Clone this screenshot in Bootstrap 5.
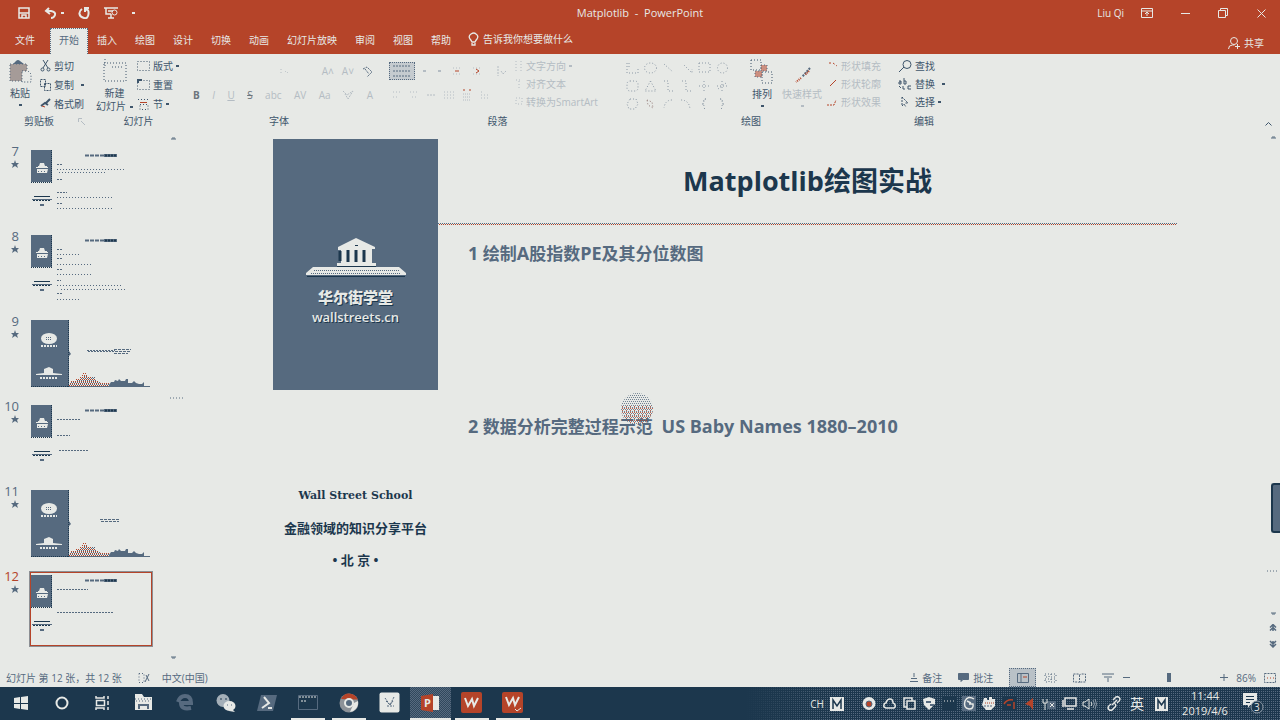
<!DOCTYPE html>
<html lang="zh-CN">
<head>
<meta charset="utf-8">
<meta name="viewport" content="width=device-width, initial-scale=1">
<title>Matplotlib - PowerPoint</title>
<link href="https://cdn.jsdelivr.net/npm/bootstrap@5.3.0/dist/css/bootstrap.min.css" rel="stylesheet">
<style>
:root{--paper:#e7e9e6;--brick:#b54429;--navy:#1c374d;--slate:#566a7f;--pale:#b4bcc3}
body{background:var(--paper);color:var(--slate);font:10px/14px "Open Sans","Noto Sans CJK SC",sans-serif}
button{background:none;border:0;padding:0;color:inherit;font:inherit}
svg{display:block;flex:none;fill:none;stroke:currentColor}
svg text{stroke:none;fill:currentColor}
.brick{background:var(--brick);color:var(--paper)}
.titlebar{height:26px}
.titlebar .docname{left:0;right:0;pointer-events:none;font-size:11px}
.titlebar .qat{gap:14px;padding-left:18px}
.winbtn{width:38px}
.tabs{height:28px}
.tabs .nav-link{color:var(--paper);padding:5px 9px 7px;line-height:14px}
.tabs .nav-link.first{padding:5px 15px 7px}
.tabs .nav-link.active{background:var(--paper);color:var(--slate);border:1px dotted var(--slate);border-bottom:0;padding:4px 8px 7px}
.ribbon{height:77px;color:#3e556b}
.group{height:75px;padding-top:3px}
.group .body{height:57px}
.group .caption{height:15px}
.g-clip{width:92px}.g-slide{width:93px}.g-font{width:188px}.g-para{width:249px}.g-draw{width:272px}.g-edit{width:60px}
.launch{width:14px}
.stack{display:flex;flex-direction:column;gap:5px;padding-top:2px}
.g-edit .stack,.g-draw .stack,.g-para .stack{gap:4px}
.mini{display:flex;align-items:center;gap:3px;height:14px;white-space:nowrap}
.big{display:flex;flex-direction:column;align-items:center;line-height:13px;white-space:nowrap;padding-top:2px}
.dim{color:var(--pale)}
.caret{width:3px;height:2px;background:currentColor;display:block}
.dot{stroke-dasharray:1 2}
.lit{border:1px dotted var(--slate);background:#c5cbcf;width:26px;height:18px}
.toolrow{height:24px}
.tools{padding-top:2px}
.shapes{display:grid;grid-template-columns:repeat(6,18px);grid-auto-rows:18px;color:#8c99a6;padding-top:2px}
.thumbs{width:184px;padding-top:13px}
.thumb{display:grid;grid-template-columns:19px 120px;column-gap:12px;height:85px;text-align:left}
.thumb .num{font-size:13px;line-height:14px;text-align:right;margin-top:-4px}
.thumb .num svg{margin:2px 0 0 auto}
.thumb .pic{height:72px;padding:2px 0}
.thumb.on .num{color:var(--brick)}
.thumb.on .num svg{color:var(--slate)}
.thumb.on .pic{outline:1px solid var(--brick);box-shadow:0 0 0 2px #8c8f94}
.sbar{width:14px}
.thumbs .sbar{margin-top:-8px}
.stage{padding:8px 0 0 89px}
.side{width:165px}
.side .panel{background:var(--slate);color:var(--paper);height:251px;padding-top:99px;text-shadow:1px 1px 0 var(--navy)}
.side .cn{font-size:15px;line-height:22px;font-weight:900}
.side .site{font-size:13px;line-height:18px;font-weight:600}
.motto{color:var(--navy);font-weight:700;padding-top:98px}
.motto .en{font:700 11px/16px "DejaVu Serif",serif}
.motto .zh{font-size:13px;line-height:16px}
.content{margin-right:89px}
.content h1{color:var(--navy);font-size:27px;line-height:36px;font-weight:700;height:84px;padding-top:24px;margin:0;text-align:center}
.rule{height:2px;background:repeating-linear-gradient(90deg,var(--slate) 0 1px,transparent 1px 2px) 0 0/100% 1px no-repeat,repeating-linear-gradient(90deg,transparent 0 1px,var(--brick) 1px 2px) 0 1px/100% 1px no-repeat}
.point{font-size:17px;line-height:24px;font-weight:700;margin:0;padding-left:30px;white-space:pre-wrap}
.point .latin{font-size:18px}
.pointer{left:183px;top:-17px;opacity:.8}
.sidetab{right:0;top:352px;width:9px;height:50px;background:var(--slate);border:2px solid var(--navy);border-right:0;border-radius:3px 0 0 3px}
.status{height:19px;padding:0 4px 0 6px}
.status input{width:84px;height:12px;appearance:none;background:none;margin:0 2px}
.status input::-webkit-slider-thumb{appearance:none;width:4px;height:9px;background:var(--slate)}
.viewon{width:27px;height:19px;border:1px dotted var(--slate);background:#b9c1c7}
.taskbar{background:var(--navy);color:var(--paper);height:33px}
.app{width:41px;height:33px;display:flex;align-items:center;justify-content:center;border-bottom:2px solid transparent}
.app.run{background:linear-gradient(var(--paper),var(--paper)) center bottom/34px 2px no-repeat border-box}
.app.cur{border-bottom-color:var(--paper);background:conic-gradient(var(--slate) 25%,#30485d 0 50%,var(--slate) 0 75%,#30485d 0) 0 0/2px 2px}
.tray{padding-left:61px;background:linear-gradient(90deg,var(--navy),transparent 90px),linear-gradient(90deg,var(--navy) 50%,transparent 50%) 0 0/2px 2px,linear-gradient(var(--slate) 50%,var(--navy) 50%) 0 0/2px 2px}
.tico{width:20px;display:flex;justify-content:center}
.ime{margin-right:12px}
.clock{width:60px;font-size:11px;line-height:15px;padding-bottom:2px}
</style>
</head>
<body class="d-flex flex-column min-vh-100 overflow-x-hidden">
<svg width="0" height="0" class="position-absolute" aria-hidden="true">
 <symbol id="star" viewBox="0 0 8 8"><path fill="currentColor" stroke="none" d="M4 0l1 3h3L6 5l1 3-3-2-3 2 1-3-2-2h3z"/></symbol>
 <symbol id="hall" viewBox="0 0 100 40"><path fill="#e7e9e6" stroke="none" d="M50 0L69 9v2h-3v14h4v4h23l7 6v2H0v-2l7-6h24v-4h4V12h-3V9z"/><path stroke="#1c374d" stroke-width="3" d="M34 13v10M42 12v12M50 12v12M58 12v12"/><path stroke="#1c374d" d="M31 28.500h39M49 7.500h3M1 38.500h98"/><path stroke="#566a7f" stroke-dasharray="1 1" d="M8 32.500h86M5 35.500h90"/></symbol>
 <symbol id="mast" viewBox="0 0 120 68"><path fill="#566a7f" stroke="none" d="M0 0h21v32H0z"/><path stroke="#1c374d" stroke-dasharray="1 1" d="M0 32.500h21M20.500 0v32"/><path fill="#e7e9e6" stroke="none" d="M9 13h4l1 3h2v1h-9v-1h1zM5 17h12v1H5zM6 19h11l-1 4H6z"/><path stroke="#566a7f" stroke-dasharray="1 2" d="M7 21.500h9"/><path stroke="#1c374d" d="M3 46.500h16"/><path stroke="#566a7f" stroke-width="2" d="M9 55h4"/><path stroke="#566a7f" d="M1 49.500h20"/><path stroke="#1c374d" stroke-dasharray="2 1" d="M2 50.500h18"/><path stroke="#566a7f" stroke-width="2" stroke-dasharray="4 1" d="M54 5.500h19"/><path stroke="#566a7f" stroke-width="3" d="M73 5.500h13"/><path stroke="#1c374d" stroke-width="2" stroke-dasharray="2 1" d="M74 5.500h12"/></symbol>
 <symbol id="cover" viewBox="0 0 120 68"><path fill="#566a7f" stroke="none" d="M0 0h38v67H0zM38 31l2 3-2 2z"/><path stroke="#1c374d" stroke-dasharray="1 1" d="M0 66.500h38M37.500 0v67"/><ellipse cx="18" cy="18.500" rx="8" ry="5.500" fill="#e7e9e6" stroke="none"/><path stroke="#566a7f" stroke-dasharray="1 1" d="M15 17.500h6M15 19.500h6"/><path stroke="#e7e9e6" stroke-width="2" stroke-dasharray="2 1" d="M10 26h16M9 58h18"/><path fill="#e7e9e6" stroke="none" d="M18 47l4 2v4l9 1v1H5v-1l8-1v-4z"/><path stroke="#b54429" stroke-dasharray="1 1" d="M38 65.500h44M39 63.500h40M40 61.500h27M45 59.500h20M49 57.500h13M51 55.500h5M52 53.500h3"/><path stroke="#566a7f" stroke-dasharray="1 1" d="M39 64.500h44M40 62.500h30M46 60.500h20M50 58.500h14M53 56.500h4M61 57.500h4"/><path fill="#566a7f" stroke="none" d="M38 66h81v1H38zM78 65l2-3h3l1-2 3 1 1-2 2 2h4l1-2h2v4h4l2-2 2 2 3 1h3l2-2v4H78z"/></symbol>
</svg>

<header class="brick">
 <div class="titlebar d-flex align-items-center position-relative">
  <div class="qat d-flex align-items-center">
   <button aria-label="保存"><svg width="12" height="12"><path stroke-width="1.500" d="M1 1h10v10H1zM1 6h10M4 11V8h4v3"/></svg></button>
   <button aria-label="撤消" class="d-flex align-items-center gap-1"><svg width="13" height="12"><path stroke-width="2" d="M5 1L2 4l4 3M2 4h5q5 1 4 4-1 3-4 3"/></svg><i class="caret"></i></button>
   <button aria-label="重复"><svg width="12" height="12"><path stroke-width="2" d="M4 2Q1 4 1.500 7t4.500 4 4.500-4T8 3M7 5V1h4"/></svg></button>
   <button aria-label="从头开始"><svg width="14" height="12"><path stroke-width="1.500" d="M0 1h14M2 1v6h5M7 7v4M4 11h6M4 4h5"/><circle cx="10.500" cy="5.500" r="2.500"/></svg></button>
   <button class="d-flex" aria-label="自定义工具栏"><i class="caret"></i></button>
  </div>
  <div class="docname position-absolute text-center">Matplotlib &nbsp;-&nbsp; PowerPoint</div>
  <div class="ms-auto d-flex align-items-center">
   <span class="me-1">Liu Qi</span>
   <button class="winbtn" aria-label="功能区显示选项"><svg class="mx-auto" width="12" height="10"><path d="M.5.5h11v9H.5zM.5 3h11M6 8V4M4 6l2-2 2 2"/></svg></button>
   <button class="winbtn" aria-label="最小化"><svg class="mx-auto" width="9" height="9"><path d="M0 4.500h9"/></svg></button>
   <button class="winbtn" aria-label="向下还原"><svg class="mx-auto" width="10" height="10"><path d="M.5 2.500h7v7h-7zM2.500 2V.5h7v7H8"/></svg></button>
   <button class="winbtn" aria-label="关闭"><svg class="mx-auto" width="9" height="9"><path d="M.5.5l8 8M8.500.5l-8 8"/></svg></button>
  </div>
 </div>
 <nav class="tabs nav flex-nowrap align-items-end text-nowrap" aria-label="功能区">
  <a class="nav-link first" href="#">文件</a><a class="nav-link active" href="#" aria-current="page">开始</a><a class="nav-link" href="#">插入</a><a class="nav-link" href="#">绘图</a><a class="nav-link" href="#">设计</a><a class="nav-link" href="#">切换</a><a class="nav-link" href="#">动画</a><a class="nav-link" href="#">幻灯片放映</a><a class="nav-link" href="#">审阅</a><a class="nav-link" href="#">视图</a><a class="nav-link" href="#">帮助</a>
  <button class="d-flex align-items-center gap-1 mb-1 ps-2 pb-1"><svg width="11" height="14"><path d="M4 10Q3 8 2 7q-2-3 1-5 3-2 5 0 3 2 1 5-1 1-2 3zM4 11v2h3v-2" stroke-width="1.300"/></svg><span>告诉我你想要做什么</span></button>
  <button class="ms-auto me-3 mb-1 d-flex align-items-center gap-1"><svg width="12" height="12"><circle cx="6" cy="4" r="3.500"/><path d="M.5 12q0-4 4-4h2M7 9.500h5M9.500 7v5"/></svg><span>共享</span></button>
 </nav>
</header>

<section class="ribbon d-flex align-items-start" aria-label="开始">
 <div class="group g-clip">
  <div class="body d-flex">
   <button class="big ms-2"><svg width="24" height="24"><path fill="#a59b98" stroke="#566a7f" class="dot" d="M2 5h17v17H2z"/><path fill="#566a7f" stroke="none" d="M5 5l3-3q2-2 4 0l4 3z"/><path fill="#e7e9e6" class="dot" d="M14 12h6l3 3v8h-9z"/></svg><span class="mt-1">粘贴</span><i class="caret mt-1"></i></button>
   <div class="stack ms-2">
    <button class="mini"><svg width="11" height="12"><path d="M3 0l5 8M8 0L3 8"/><circle cx="2.500" cy="9.500" r="1.500"/><circle cx="8.500" cy="9.500" r="1.500"/></svg>剪切</button>
    <button class="mini"><svg width="11" height="12" stroke-dasharray="2 1"><path d="M.5.5h5v7h-5zM4.500 4.500h6v7h-6z"/></svg>复制 <i class="caret ms-1"></i></button>
    <button class="mini"><svg width="11" height="12"><path stroke-width="2" d="M1 8l4-3 3 2M6 5l4-4"/><path stroke="#b54429" d="M2 8l3 1"/></svg>格式刷</button>
   </div>
  </div>
  <div class="caption d-flex"><span class="flex-grow-1 text-center">剪贴板</span><button class="launch dim" aria-label="剪贴板选项"><svg width="7" height="7"><path d="M.5 4V.5H4M3 3l4 4"/></svg></button></div>
 </div>
 <div class="group g-slide">
  <div class="body d-flex">
   <button class="big ms-1"><svg width="24" height="24"><path class="dot" d="M1 4h22v18H1z"/><path class="dot" d="M2 0v8M9 8h10"/></svg><span class="mt-1">新建</span><span class="d-flex align-items-center gap-1">幻灯片<i class="caret"></i></span></button>
   <div class="stack ms-1">
    <button class="mini"><svg width="13" height="12"><path class="dot" d="M.5 1.500h12v9H.5z"/></svg>版式 <i class="caret"></i></button>
    <button class="mini"><svg width="13" height="12"><path class="dot" d="M.5 1.500h12v9H.5z"/><path stroke-width="2" d="M1 4V1h4"/></svg>重置</button>
    <button class="mini"><svg width="13" height="12"><path stroke="#b54429" d="M3 4.500h7"/><path class="dot" d="M1 1.500h10M3 6.500h8v5H3z"/></svg>节 <i class="caret"></i></button>
   </div>
  </div>
  <div class="caption text-center">幻灯片</div>
 </div>
 <div class="group g-font">
  <div class="body dim tools">
   <div class="toolrow d-flex align-items-center justify-content-end gap-2 ps-5">
    <button class="me-4" aria-label="字号"><svg width="10" height="6"><path class="dot" d="M1 1v4M5 3l2 2 2-2"/></svg></button>
    <button>A&#x2c4;</button><button>A&#x2c5;</button><button aria-label="清除格式"><svg width="11" height="11"><path stroke="#566a7f" stroke-dasharray="2 1" d="M1 3l4-2 5 5-5 5M3 3l4 5"/></svg></button>
   </div>
   <div class="toolrow d-flex align-items-center justify-content-between ps-2 pe-0">
    <button class="fw-bold text-secondary">B</button><button class="fst-italic">I</button><button class="text-decoration-underline">U</button><button class="text-decoration-line-through text-secondary">S</button><button>abc</button><button>AV</button><button>Aa</button><button aria-label="突出显示"><svg width="11" height="10"><path stroke-dasharray="2 1" d="M0 1l4 4L10 1 5 9 2 4"/></svg></button><button>A</button>
   </div>
  </div>
  <div class="caption text-center">字体</div>
 </div>
 <div class="group g-para">
  <div class="body d-flex dim">
   <div class="tools ms-3">
    <div class="toolrow d-flex align-items-center gap-2">
     <button class="lit" aria-label="项目符号"><svg class="mx-auto" width="18" height="12"><path stroke="#566a7f" stroke-dasharray="2 1" d="M0 1h18M0 6h18M0 11h18"/></svg></button>
     <i class="caret"></i><i class="caret ms-1"></i>
     <button class="ms-1" aria-label="减少缩进"><svg width="8" height="8"><path class="dot" d="M0 1h8M0 7h8"/><path stroke="#b54429" d="M2 4h4"/></svg></button>
     <button class="ms-1" aria-label="增加缩进"><svg width="8" height="8"><path class="dot" d="M0 1h8M0 7h8"/><path stroke="#b54429" d="M3 2l3 2-3 2"/></svg></button>
     <button class="ms-2" aria-label="行距"><svg width="10" height="12"><path stroke-dasharray="2 1" d="M1 1v10M4 6l2 3 3-3"/></svg></button>
    </div>
    <div class="toolrow d-flex align-items-center gap-2 ps-1">
     <button aria-label="左对齐"><svg width="9" height="8"><path class="dot" d="M0 1h9M0 6h6"/></svg></button><button aria-label="居中"><svg width="9" height="8"><path class="dot" d="M0 1h9M2 6h5"/></svg></button><button aria-label="右对齐"><svg width="9" height="8"><path stroke-dasharray="2 1" d="M0 4h9"/></svg></button><button aria-label="两端对齐"><svg width="10" height="8"><path class="dot" d="M0 1h10M0 4h10M0 7h10"/></svg></button><button aria-label="分散对齐"><svg width="10" height="12" stroke="#566a7f"><path stroke="#b54429" stroke-dasharray="2 4" d="M1 1h9"/><path stroke-dasharray="1 1" d="M1 5h8M1 8h8M1 11h8"/></svg></button><button aria-label="分栏"><svg width="10" height="8"><path class="dot" d="M1 1h3M1 4h8M1 7h8"/></svg></button>
    </div>
   </div>
   <div class="stack ms-2">
    <button class="mini"><svg width="8" height="10"><path class="dot" d="M1 0v10M6 0v10"/></svg>文字方向 <i class="caret"></i></button>
    <button class="mini"><svg width="8" height="10"><path class="dot" d="M1 1h6M4 2v8"/></svg>对齐文本</button>
    <button class="mini"><svg width="8" height="10"><path class="dot" d="M1 1h6v6H1z"/></svg>转换为SmartArt</button>
   </div>
  </div>
  <div class="caption d-flex"><span class="flex-grow-1 text-center">段落</span></div>
 </div>
 <div class="group g-draw">
  <div class="body d-flex">
   <div class="shapes ms-1" role="group" aria-label="形状">
    <button aria-label="文本框"><svg width="13" height="12"><path class="dot" d="M1 1v10h11V5M3 1v5"/></svg></button><button aria-label="椭圆"><svg width="13" height="12"><ellipse class="dot" cx="6.500" cy="6" rx="6" ry="5"/></svg></button><button aria-label="直线"><svg width="13" height="12"><path class="dot" d="M2 2l9 8"/></svg></button><button aria-label="箭头"><svg width="13" height="12"><path class="dot" d="M4 3l8 8V7"/></svg></button><button aria-label="矩形"><svg width="13" height="12"><path class="dot" d="M1 1h11v9H1z"/></svg></button><button aria-label="圆"><svg width="13" height="12"><circle class="dot" cx="6.500" cy="6" r="5"/></svg></button>
    <button aria-label="圆角矩形"><svg width="13" height="12"><rect class="dot" x="1" y="1" width="11" height="10" rx="3"/></svg></button><button aria-label="三角形"><svg width="13" height="12"><path class="dot" d="M6.500 1L12 11H1z"/></svg></button><button aria-label="肘形"><svg width="13" height="12"><path class="dot" d="M2 1h4v10h5"/></svg></button><button aria-label="连接符"><svg width="13" height="12"><path class="dot" d="M2 1h4v10h5"/></svg></button><button aria-label="十字"><svg width="13" height="12"><path class="dot" d="M6 1v10M1 6h11"/></svg></button><button aria-label="星形"><svg width="13" height="12"><path class="dot" d="M6 1v10M1 6h11M2 9l8-6"/></svg></button>
    <button aria-label="六边形"><svg width="13" height="12"><path class="dot" d="M4 1h6l2 5-3 5H3L1 6z"/></svg></button><button aria-label="任意形"><svg width="13" height="12"><path stroke="#947b78" class="dot" d="M3 2l5 2 1 6-5-3z"/></svg></button><button aria-label="弧形"><svg width="13" height="12"><path class="dot" d="M10 2q-7 0-8 8"/></svg></button><button aria-label="曲线"><svg width="13" height="12"><path class="dot" d="M1 2q8 0 9 9"/></svg></button><button aria-label="左大括号"><svg width="13" height="12"><path class="dot" stroke="#566a7f" d="M8 1Q5 1 6 4 6 6 4 6q2 0 2 3 0 2 2 2"/></svg></button><button aria-label="右大括号"><svg width="13" height="12"><path class="dot" stroke="#566a7f" d="M4 1q3 0 2 3 0 2 2 2-2 0-2 3 0 2-2 2"/></svg></button>
   </div>
   <button class="big ms-3"><svg width="24" height="25"><path class="dot" d="M1 1h10v10H1zM12 13h10v11H12z"/><path fill="#b54429" fill-opacity=".55" stroke="#566a7f" class="dot" d="M11 6h6v6h-5v6H5v-6h6z"/></svg><span class="mt-1">排列</span><i class="caret mt-1"></i></button>
   <button class="big ms-2 dim"><svg width="24" height="25"><path stroke="#566a7f" stroke-width="2" stroke-dasharray="2 1" d="M20 9l-8 9"/><path stroke="#b54429" stroke-width="2" stroke-dasharray="1 1" d="M19 12l-4 4M11 19l-5 4"/></svg><span class="mt-1">快速样式</span><i class="caret mt-1"></i></button>
   <div class="stack ms-1 dim">
    <button class="mini"><svg width="12" height="10"><path stroke="#b54429" stroke-dasharray="2 2" d="M3 2h4l4 3"/></svg>形状填充</button>
    <button class="mini"><svg width="12" height="10"><path stroke="#b54429" d="M10 1L4 7"/></svg>形状轮廓</button>
    <button class="mini"><svg width="12" height="10"><path stroke="#b54429" stroke-dasharray="2 1" d="M1 8h7l2-5"/></svg>形状效果</button>
   </div>
  </div>
  <div class="caption d-flex"><span class="flex-grow-1 text-center">绘图</span><span class="launch"></span></div>
 </div>
 <div class="group g-edit">
  <div class="body stack ps-1">
   <button class="mini"><svg width="14" height="12"><circle cx="9" cy="4.500" r="4"/><path d="M6 7l-5 5"/></svg>查找</button>
   <button class="mini"><svg width="14" height="12"><path d="M1 3h2v3H1V4h2M6 0v6h2V3H6M5 8v3h2M13 8h-3v3h3M1 8l2 2"/></svg>替换 <i class="caret ms-1"></i></button>
   <button class="mini"><svg width="14" height="12"><path stroke-dasharray="2 1" d="M4 1v9l2-2 2 3M4 1l6 6H7"/></svg>选择 <i class="caret"></i></button>
  </div>
  <div class="caption text-center">编辑</div>
 </div>
 <button class="ms-auto me-2 align-self-end mb-1" aria-label="折叠功能区"><svg width="7" height="6"><path d="M.5 4.500l3-3 3 3"/></svg></button>
</section>

<main class="d-flex flex-grow-1 position-relative">
 <nav class="thumbs flex-shrink-0 d-flex" aria-label="幻灯片缩略图">
  <div class="flex-grow-1 pt-1">
   <button class="thumb"><span class="num">7<svg width="8" height="8"><use href="#star"/></svg></span><span class="pic"><svg width="120" height="68"><use href="#mast"/><path stroke-dasharray="2 1" d="M26 14.500h6M26 29.500h6M26 42.500h10M26 53.500h6"/><path class="dot" d="M26 19.500h68M28 22.500h46M26 47.500h56M26 58.500h56"/></svg></span></button>
   <button class="thumb"><span class="num">8<svg width="8" height="8"><use href="#star"/></svg></span><span class="pic"><svg width="120" height="68"><use href="#mast"/><path stroke-dasharray="2 1" d="M26 14.500h6M26 23.500h6M26 34.500h6M26 45.500h4M26 58.500h6"/><path class="dot" d="M26 19.500h24M26 29.500h36M26 39.500h36M26 50.500h64M30 54.500h66M26 64.500h22"/></svg></span></button>
   <button class="thumb"><span class="num">9<svg width="8" height="8"><use href="#star"/></svg></span><span class="pic"><svg width="120" height="68"><use href="#cover"/><path stroke-dasharray="2 1" d="M56 30.500h28M57 31.500h26"/><path stroke-dasharray="3 1" d="M83 29.500h17M84 31.500h15M83 33.500h14"/></svg></span></button>
   <button class="thumb"><span class="num">10<svg width="8" height="8"><use href="#star"/></svg></span><span class="pic"><svg width="120" height="68"><use href="#mast"/><path stroke-dasharray="2 1" d="M26 14.500h24M26 30.500h13M28 45.500h30"/></svg></span></button>
   <button class="thumb"><span class="num">11<svg width="8" height="8"><use href="#star"/></svg></span><span class="pic"><svg width="120" height="68"><use href="#cover"/><path stroke-dasharray="3 1" d="M69 29.500h19M70 31.500h18"/></svg></span></button>
   <button class="thumb on" aria-current="true"><span class="num">12<svg width="8" height="8"><use href="#star"/></svg></span><span class="pic"><svg width="120" height="68"><use href="#mast"/><path stroke-dasharray="2 1" d="M26 14.500h31M26 37.500h57"/></svg></span></button>
  </div>
  <div class="sbar d-flex flex-column justify-content-between pb-2"><svg width="9" height="4"><path d="M1 3h5M2 2h3"/></svg><svg width="13" height="2"><path class="dot" d="M0 1h13"/></svg><svg width="9" height="4"><path d="M1 1h5M2 2h3"/></svg></div>
 </nav>

 <article class="stage d-flex flex-grow-1">
  <div class="side flex-shrink-0 text-center">
   <div class="panel">
    <svg class="mx-auto" width="100" height="40"><use href="#hall"/></svg>
    <div class="cn mt-2">华尔街学堂</div>
    <div class="site">wallstreets.cn</div>
   </div>
   <div class="motto">
    <div class="en">Wall Street School</div>
    <div class="zh mt-3">金融领域的知识分享平台</div>
    <div class="zh mt-3">• 北 京 •</div>
   </div>
  </div>
  <div class="content flex-grow-1">
   <h1>Matplotlib绘图实战</h1>
   <div class="rule"></div>
   <p class="point pt-3"><span class="latin">1</span> 绘制<span class="latin">A</span>股指数<span class="latin">PE</span>及其分位数图</p>
   <div class="mt-5 pt-5">
    <p class="point mt-5 pt-1 position-relative"><span class="latin">2</span> 数据分析完整过程示范  <span class="latin">US Baby Names 1880–2010</span><svg class="pointer position-absolute" width="33" height="33"><defs><pattern id="halo" width="4" height="4" patternUnits="userSpaceOnUse"><path stroke="none" fill="#566a7f" d="M0 0h1v1H0zM2 0h1v1H2zM1 2h1v1H1zM3 2h1v1H3z"/></pattern><pattern id="glow" width="4" height="4" patternUnits="userSpaceOnUse"><path stroke="none" fill="#b54429" d="M1 1h1v1H1zM3 3h1v1H3zM1 3h1v1H1z"/></pattern></defs><circle cx="16" cy="16" r="16" stroke="none" fill="url(#halo)"/><path stroke="none" fill="url(#glow)" d="M0 12h33q0 10-9 18H9Q0 24 0 12z"/></svg></p>
   </div>
  </div>
 </article>
 <div class="sbar d-flex flex-column align-items-center flex-shrink-0 py-1"><svg width="5" height="4"><path d="M0 3h5M1 2h3"/></svg>
  <svg class="mt-auto mb-4" width="12" height="2"><path class="dot" d="M0 1h12"/></svg>
  <svg class="mt-3" width="7" height="4"><path d="M1 1h5M2 2h3"/></svg><button class="mt-2" aria-label="上一张幻灯片"><svg width="8" height="8"><path d="M1 3.500l3-3 3 3M1 6.500l3-3 3 3M4 1v6" stroke-width="1.500"/></svg></button><button class="mt-2 mb-3" aria-label="下一张幻灯片"><svg width="8" height="8"><path stroke-width="1.500" d="M1 1l3 3 3-3M1 4l3 3 3-3M4 1v6"/></svg></button></div>
 <div class="sidetab position-absolute"></div>
</main>

<footer>
 <div class="status d-flex align-items-center">
  <span>幻灯片 第 12 张，共 12 张</span>
  <svg class="ms-3" width="12" height="10"><path class="dot" d="M1 .5h5v9H1z"/><path d="M7 9l4-8M8 2l3 6"/></svg>
  <span class="ms-2 ps-1">中文(中国)</span>
  <button class="ms-auto d-flex align-items-center gap-1"><svg width="8" height="9"><path d="M4 0v4M1 5.500h6M0 8.500h8"/></svg>备注</button>
  <button class="ms-3 d-flex align-items-center gap-1"><svg width="11" height="9"><path fill="currentColor" d="M.5.5h10v6H5l-2 2v-2H.5z"/></svg>批注</button>
  <button class="viewon ms-3" aria-label="普通视图"><svg class="mx-auto" width="12" height="10"><path d="M.5.5h11v9H.5zM4 1v8"/><path stroke="#b54429" d="M6 4h4"/></svg></button>
  <button class="ms-2" aria-label="幻灯片浏览"><svg width="13" height="10"><path class="dot" d="M1 1h4v3H1zM7 1h5v3H7zM1 6h4v3H1zM7 6h5v3H7z"/></svg></button>
  <button class="ms-3" aria-label="阅读视图"><svg width="13" height="10"><path stroke-dasharray="2 1" d="M.5 1h5l1 1 1-1h5v8h-5l-1 1-1-1h-5zM6.500 2v7"/></svg></button>
  <button class="ms-3" aria-label="幻灯片放映"><svg width="12" height="10"><path d="M0 1h12M2 4h8M6 5v4"/></svg></button>
  <button class="ms-2" aria-label="缩小"><svg width="10" height="9"><path d="M1 4.500h7"/></svg></button>
  <input type="range" min="10" max="160" value="72" aria-label="缩放">
  <button aria-label="放大"><svg width="8" height="9"><path d="M0 4.500h8M4 1v7"/></svg></button>
  <span class="ms-2">86%</span>
  <button class="ms-2" aria-label="适应窗口"><svg width="12" height="10"><path stroke-dasharray="2 1" d="M.5.5h11v9H.5z"/><path stroke="#b54429" class="dot" d="M3 5h7"/></svg></button>
 </div>
 <div class="taskbar d-flex">
  <button class="app" aria-label="开始"><svg width="14" height="14"><path fill="currentColor" stroke="none" d="M0 2l6-1v6H0zM7 1l7-1v7H7zM0 8h6v5l-6-1zM7 8h7v6l-7-1z"/></svg></button>
  <button class="app" aria-label="搜索"><svg width="14" height="14"><circle cx="7" cy="7" r="5.500" stroke-width="2"/></svg></button>
  <button class="app" aria-label="任务视图"><svg width="16" height="14"><path d="M1 0v2h8V0M1.500 4.500h8v5h-8zM1 14v-2h8v2M13 0v3M13 5v4M13 11v3" stroke-width="1.500"/></svg></button>
  <button class="app" aria-label="文件资源管理器"><svg width="19" height="17"><path fill="#e7e9e6" stroke="none" d="M1 0h7l2 3h8v13H1z"/><path stroke="#566a7f" class="dot" d="M1 5h17M2 7h15"/><path stroke="#566a7f" stroke-width="2" d="M5 15v-4h9v4"/></svg></button>
  <button class="app" aria-label="Edge"><svg width="17" height="18"><path stroke="#566a7f" stroke-width="4" d="M2 8Q4 2 9 2q6 0 6 7H5q0 7 10 5"/></svg></button>
  <button class="app" aria-label="微信"><svg width="21" height="18"><circle cx="8" cy="6.500" r="6.500" fill="#a4afb8" stroke="none"/><path stroke="#1c374d" d="M5 5h2M10 5h2"/><ellipse cx="14.500" cy="12" rx="6" ry="5" fill="#e7e9e6" stroke="none"/><path fill="#e7e9e6" stroke="none" d="M17 15l3 3-6-1z"/><path stroke="#566a7f" d="M12 11h1M16 11h1"/></svg></button>
  <button class="app" aria-label="PowerShell"><svg width="20" height="16"><path fill="#566a7f" stroke="none" d="M4 0h16l-4 16H0z"/><path stroke-width="2" d="M7 2l5 6-7 5M11 13h4"/></svg></button>
  <button class="app run" aria-label="终端"><svg width="20" height="15"><path stroke="#566a7f" d="M.5.5h19v14H.5z"/><path stroke="#e7e9e6" stroke-dasharray="2 1" d="M1 2h18M3 6h5"/></svg></button>
  <button class="app run" aria-label="Chrome"><svg width="20" height="20"><circle cx="10" cy="10" r="9.500" fill="#8d9298" stroke="none"/><path fill="#b54429" stroke="none" d="M2 6Q5 0 10 .5q6 0 9 6h-9z"/><path fill="#e7e9e6" stroke="none" d="M19 8q1 9-8 11l4-9z"/><circle cx="10" cy="10" r="4" fill="#566a7f" stroke="#e7e9e6" stroke-width="2"/></svg></button>
  <button class="app" aria-label="画板"><svg width="21" height="21"><rect x=".5" y=".5" width="20" height="20" rx="2" fill="#e7e9e6" stroke="none"/><path stroke="#566a7f" stroke-dasharray="2 1" d="M6 6l5 7M15 5l-4 8M7 9l4 4M14 9l-3 4M8 14h7"/></svg></button>
  <button class="app cur" aria-label="PowerPoint"><svg width="20" height="18"><path fill="#e7e9e6" stroke="none" d="M9 2h9v14H9z"/><path fill="#b54429" stroke="none" d="M0 2l12-2v18L0 16z"/><text x="3" y="13" font-size="11" font-weight="700">P</text></svg></button>
  <button class="app run" aria-label="WPS 文字"><svg width="21" height="21"><rect width="21" height="21" rx="2" fill="#b54429" stroke="none"/><path stroke-width="2" d="M4 6l3 8 4-7 2 7 4-8"/></svg></button>
  <button class="app run" aria-label="WPS"><svg width="21" height="21"><rect width="21" height="21" rx="2" fill="#b54429" stroke="none"/><path stroke-width="2" d="M4 5l3 8 4-7 2 7 4-8"/><path d="M13 17l2 2 4-3"/></svg></button>
  <div class="tray d-flex align-items-center ms-auto">
   <span class="tico">CH</span><span class="tico ime"><svg width="14" height="14"><path fill="#e7e9e6" stroke="none" d="M0 0h14v14H0z"/><path stroke="#1c374d" stroke-width="1.500" d="M3 12V3l4 6 4-6v9"/></svg></span>
   <span class="tico"><svg width="14" height="13"><circle cx="7" cy="6.500" r="6.500" fill="#e7e9e6" stroke="none"/><circle cx="7" cy="7" r="3" fill="#b54429" stroke="#566a7f"/></svg></span>
   <span class="tico"><svg width="13" height="11"><path stroke-width="1.500" d="M3 10Q0 9 1 7q0-2 2-2 1-4 4-4t3 4q3 1 2 4l-1 1z"/></svg></span>
   <span class="tico"><svg width="13" height="13"><path stroke-width="1.500" d="M4 4h8v8H4zM9 4V1H1v9h3"/></svg></span>
   <span class="tico"><svg width="13" height="13"><path fill="#e7e9e6" stroke="none" d="M0 2l6-2 6 2v5l-6 6-5-5z"/><path stroke="#566a7f" stroke-width="2" d="M3 5h5M7 8h4"/></svg></span>
   <span class="tico"><svg width="14" height="14"><path fill="#1c374d" stroke="none" d="M0 0h14v14H0z"/><path class="dot" d="M2 4h10"/></svg></span>
   <span class="tico"><svg width="14" height="15"><path fill="#566a7f" stroke="none" d="M0 0h14v15H0z"/><path stroke-width="1.500" d="M12 3Q6-1 3 5q-2 7 4 8 5 0 4-5H7M5 5l4 2"/></svg></span>
   <span class="tico"><svg width="14" height="13"><path fill="#e7e9e6" stroke="none" d="M2 1h3v2h2V0h3v2h3v7l-4 4H4L0 8z"/><path stroke="#b54429" stroke-dasharray="1 1" d="M3 6h9"/><path stroke="#566a7f" stroke-dasharray="2 1" d="M2 9h9"/></svg></span>
   <span class="tico"><svg width="15" height="14"><path fill="#1c374d" stroke="none" d="M0 0h15v14H0z"/><path stroke="#b54429" stroke-width="1.500" d="M2 7q3-5 9-4M5 8h4M12 5v7"/></svg></span>
   <span class="tico"><svg width="9" height="12"><path fill="#b54429" stroke="none" d="M8 0v12L5 8 0 6z"/></svg></span>
   <span class="tico"><svg width="14" height="12"><path fill="#566a7f" stroke="none" d="M5 3h9v8H5z"/><path d="M1 1v4h4V1M3 5v7M8 5l4 4M12 5l-4 4"/></svg></span>
   <span class="tico"><svg width="15" height="13"><path stroke-width="1.500" d="M3 1h11v8H3zM5 12h7M1 3v7"/></svg></span>
   <span class="tico"><svg width="15" height="12"><path d="M1 4h2l4-3v10L3 8H1zM9 4q2 2 0 4"/><path stroke="#8c99a6" d="M11 2q3 4 0 8M13 1q3 5 0 10"/></svg></span>
   <span class="tico ms-1"><svg width="15" height="15"><path stroke-width="1.500" d="M6 9l5-5M7 4l3-3q3-1 4 2 0 2-3 4M8 7q3 2 1 4l-3 3q-3 1-4-2 0-2 3-4"/></svg></span>
   <span class="tico ms-1 fs-6"><small>英</small></span>
   <span class="tico ms-1"><svg width="13" height="14"><path fill="#e7e9e6" stroke="none" d="M0 0h13v14H0z"/><path stroke="#1c374d" stroke-width="1.500" d="M3 12V3l3.500 5L10 3v9"/></svg></span>
   <div class="clock text-center ms-1">11:44<br>2019/4/6</div>
   <button class="ms-2 me-3" aria-label="通知"><svg width="21" height="21"><path fill="#e7e9e6" stroke="none" d="M0 0h14v12H7l-2 3v-3H0z"/><path stroke="#1c374d" d="M3 3.500h8M3 6.500h8M3 9.500h4"/><circle cx="14" cy="14" r="6" fill="#1c374d" stroke="#8c99a6"/><text x="11" y="18" font-size="10">3</text></svg></button>
  </div>
 </div>
</footer>
<script src="https://cdn.jsdelivr.net/npm/bootstrap@5.3.0/dist/js/bootstrap.bundle.min.js"></script>
</body>
</html>
